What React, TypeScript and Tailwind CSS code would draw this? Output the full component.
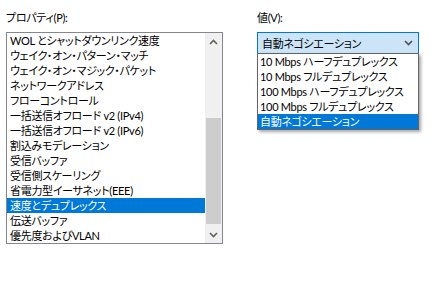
import React from 'react';

const font = "font-['Segoe_UI','Lato','Noto_Sans_CJK_JP',sans-serif] [font-feature-settings:'palt']";

const properties = [
  'WOL とシャットダウンリンク速度',
  'ウェイク・オン・パターン・マッチ',
  'ウェイク・オン・マジック・パケット',
  'ネットワークアドレス',
  'フローコントロール',
  '一括送信オフロード v2 (IPv4)',
  '一括送信オフロード v2 (IPv6)',
  '割込みモデレーション',
  '受信バッファ',
  '受信側スケーリング',
  '省電力型イーサネット(EEE)',
  '速度とデュプレックス',
  '伝送バッファ',
  '優先度およびVLAN',
];

const values = [
  '10 Mbps ハーフデュプレックス',
  '10 Mbps フルデュプレックス',
  '100 Mbps ハーフデュプレックス',
  '100 Mbps フルデュプレックス',
  '自動ネゴシエーション',
];

const Chevron = ({ up, className }: { up?: boolean; className?: string }) => (
  <svg width="9" height="6" viewBox="0 0 9 6" className={className}>
    <path d={up ? 'M1 5 L4.5 1.5 L8 5' : 'M1 1 L4.5 4.5 L8 1'} fill="none" stroke="currentColor" strokeWidth="1.6" />
  </svg>
);

const App: React.FC = () => {
  return (
    <div className={`w-[431px] h-[291px] bg-white text-black text-[11px] tracking-[-0.3px] leading-[15px] flex ${font}`}>
      {/* Properties */}
      <div className="pl-[6px] pt-[10px] w-[257px]">
        <div className="h-[15px]">プロパティ(P):</div>
        <div className="mt-[7px] w-[217px] h-[212px] border border-[#828790] flex">
          <div className="w-[198px] flex flex-col">
            {properties.map((p, i) => (
              <div
                key={p}
                className={`h-[15px] pl-[3px] whitespace-nowrap overflow-hidden ${i === 11 ? 'bg-[#0078d7] text-white' : ''}`}
              >
                {p}
              </div>
            ))}
          </div>
          <div className="w-[17px] bg-[#f0f0f0] flex flex-col">
            <div className="h-[17px] flex items-center justify-center text-[#606060]">
              <Chevron up />
            </div>
            <div className="h-[68px]" />
            <div className="h-[106px] mx-[1px] bg-[#cdcdcd]" />
            <div className="h-[2px]" />
            <div className="h-[17px] flex items-center justify-center text-[#606060]">
              <Chevron />
            </div>
          </div>
        </div>
      </div>

      {/* Value */}
      <div className="pt-[10px]">
        <div className="h-[15px]">値(V):</div>
        <div className="relative mt-[7px] w-[162px]">
          <div className="h-[22px] border border-[#0078d7] bg-[#cce4f7] flex items-center justify-between pl-[4px] pr-[5px]">
            <span>自動ネゴシエーション</span>
            <Chevron className="text-[#505050]" />
          </div>
          <div className="absolute left-0 top-[21px] w-[162px] border border-[#646464] bg-white shadow-[2px_2px_3px_rgba(0,0,0,0.35)]">
            {values.map((v, i) => (
              <div
                key={v}
                className={`h-[15px] pl-[2px] whitespace-nowrap overflow-hidden ${i === 4 ? 'bg-[#0078d7] text-white' : ''}`}
              >
                {v}
              </div>
            ))}
          </div>
        </div>
      </div>
    </div>
  );
};

export default App;
